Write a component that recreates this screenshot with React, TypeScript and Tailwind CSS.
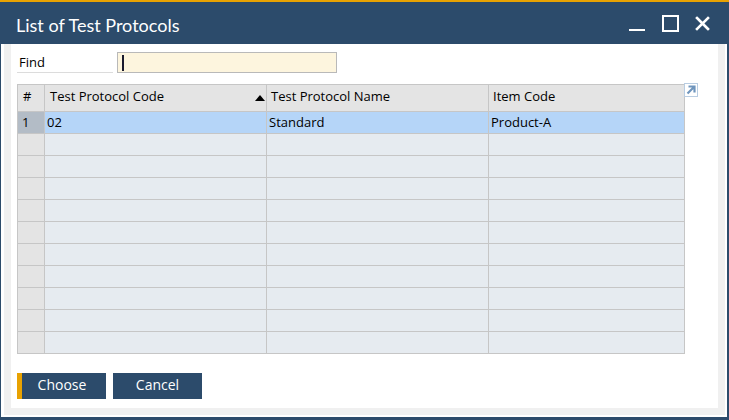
import React from "react";

const font = { fontFamily: '"Open Sans", "Noto Sans", sans-serif' };

export default function App() {
  const rows = Array.from({ length: 11 });
  return (
    <div
      className="w-[729px] h-[420px] flex flex-col bg-[#2c4b6b] border-t-2 border-[#e8a202] overflow-hidden"
      style={font}
    >
      {/* Title bar */}
      <div className="h-[42px] flex items-center pl-[16px] pr-[19px] shrink-0">
        <div
          className="text-white text-[18px] leading-[20px] flex-1 mt-[4px]"
          style={{ fontFamily: 'Lato, "Open Sans", sans-serif' }}
        >
          List of Test Protocols
        </div>
        <div className="flex items-center">
          <svg width="16" height="16" viewBox="0 0 16 16" className="mt-[1px]">
            <rect x="0" y="13" width="16" height="2" fill="#fff" />
          </svg>
          <svg width="17" height="17" viewBox="0 0 17 17" className="ml-[17px]">
            <rect x="1" y="1" width="15" height="15" fill="none" stroke="#fff" strokeWidth="2" />
          </svg>
          <svg width="15" height="15" viewBox="0 0 15 15" className="ml-[16px]">
            <path d="M2 2 L13 13 M13 2 L2 13" stroke="#fff" strokeWidth="2.6" strokeLinecap="square" />
          </svg>
        </div>
      </div>

      {/* Body */}
      <div className="flex-1 ml-[1px] mr-[2px] mb-[3px] bg-white pl-[3px] pr-[2px] pb-[2px] flex flex-col">
        <div className="flex-1 bg-[#f0f0f0] pl-[7px] pr-[7px] pb-[7px] flex flex-col">
          <div className="flex-1 bg-white pl-[6px] flex flex-col">
            {/* Find row */}
            <div className="flex items-end mt-[8px] h-[21px]">
              <div className="w-[96px] h-[21px] border-b border-[#dcdcdc] text-[13px] leading-[20px] pl-[2px] text-black">
                Find
              </div>
              <div className="ml-[4px] w-[220px] h-[21px] bg-[#fdf5de] border border-[#b9b9b9] flex items-center pl-[4px]">
                <div className="w-[1.5px] h-[16px] bg-[#1a1a2e]" />
              </div>
            </div>

            {/* Grid */}
            <div className="flex items-start mt-[11px]">
              <div className="border-l border-t border-[#c6c6c6] text-[13px] text-black">
                <div className="flex h-[27px] bg-[#e4e4e4]">
                  <div className="w-[27px] border-r border-b border-[#c6c6c6] pl-[5px] leading-[22px]">#</div>
                  <div className="w-[222px] border-r border-b border-[#c6c6c6] pl-[5px] leading-[22px] flex">
                    <span className="flex-1">Test Protocol Code</span>
                    <svg width="10" height="6" viewBox="0 0 10 6" className="mt-[10px] mr-[1px]">
                      <path d="M0 6 L5 0 L10 6 Z" fill="#000" />
                    </svg>
                  </div>
                  <div className="w-[222px] border-r border-b border-[#c6c6c6] pl-[4px] leading-[22px]">Test Protocol Name</div>
                  <div className="w-[196px] border-r border-b border-[#c6c6c6] pl-[4px] leading-[22px]">Item Code</div>
                </div>
                {rows.map((_, i) => {
                  const sel = i === 0;
                  return (
                    <div key={i} className={`flex h-[22px] ${sel ? "bg-[#b5d5f8]" : "bg-[#e6ebf0]"}`}>
                      <div
                        className={`w-[27px] border-r border-b border-[#c6c6c6] pl-[4px] leading-[21px] ${
                          sel ? "bg-[#b3bcc6]" : "bg-[#e4e4e4]"
                        }`}
                      >
                        {sel ? "1" : ""}
                      </div>
                      <div className="w-[222px] border-r border-b border-[#c6c6c6] pl-[2px] leading-[21px]">
                        {sel ? "02" : ""}
                      </div>
                      <div className="w-[222px] border-r border-b border-[#c6c6c6] pl-[2px] leading-[21px]">
                        {sel ? "Standard" : ""}
                      </div>
                      <div className="w-[196px] border-r border-b border-[#c6c6c6] pl-[2px] leading-[21px]">
                        {sel ? "Product-A" : ""}
                      </div>
                    </div>
                  );
                })}
              </div>
              <svg width="14" height="14" viewBox="0 0 14 14" className="-ml-[1px] -mt-[1px]">
                <rect x="0.5" y="0.5" width="13" height="13" fill="#fff" stroke="#b9cde2" />
                <path d="M3.5 10.5 L9.5 4.5 M4.5 3.5 L10.5 3.5 L10.5 9.5" stroke="#6f95bd" strokeWidth="2.2" fill="none" />
              </svg>
            </div>

            {/* Buttons */}
            <div className="flex mt-[19px] gap-[7px]">
              <button className="w-[89px] h-[26px] bg-[#2c4b6b] border-l-[5px] border-[#e8a202] text-white text-[14px] leading-[24px] flex items-start justify-center pr-[4px]">
                Choose
              </button>
              <button className="w-[89px] h-[26px] bg-[#2c4b6b] text-white text-[14px] leading-[24px] flex items-start justify-center">
                Cancel
              </button>
            </div>
          </div>
        </div>
      </div>
    </div>
  );
}
